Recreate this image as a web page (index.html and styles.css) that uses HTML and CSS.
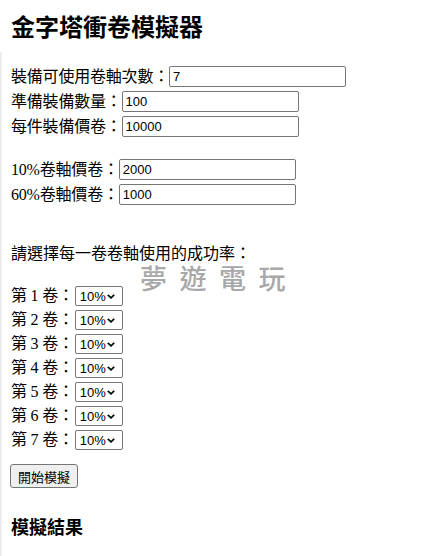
FILE: index.html
```html
<!DOCTYPE html>
<html lang="zh-Hant">
<head>
<meta charset="utf-8">
<title>金字塔衝卷模擬器</title>
<link rel="stylesheet" href="styles.css">
</head>
<body>
<h1 class="title">金字塔衝卷模擬器</h1>
<div class="page">
  <div class="group group-main">
    <div class="row"><label>裝備可使用卷軸次數：</label><input class="field" type="text" value="7"></div>
    <div class="row"><label>準備裝備數量：</label><input class="field" type="text" value="100"></div>
    <div class="row"><label>每件裝備價卷：</label><input class="field" type="text" value="10000"></div>
  </div>
  <div class="group group-price">
    <div class="row"><label>10%卷軸價卷：</label><input class="field" type="text" value="2000"></div>
    <div class="row"><label>60%卷軸價卷：</label><input class="field" type="text" value="1000"></div>
  </div>
  <p class="prompt">請選擇每一卷卷軸使用的成功率：</p>
  <div class="scrolls">
    <div class="srow"><label>第 1 卷：</label><select class="pick"><option>10%</option><option>60%</option></select></div>
    <div class="srow"><label>第 2 卷：</label><select class="pick"><option>10%</option><option>60%</option></select></div>
    <div class="srow"><label>第 3 卷：</label><select class="pick"><option>10%</option><option>60%</option></select></div>
    <div class="srow"><label>第 4 卷：</label><select class="pick"><option>10%</option><option>60%</option></select></div>
    <div class="srow"><label>第 5 卷：</label><select class="pick"><option>10%</option><option>60%</option></select></div>
    <div class="srow"><label>第 6 卷：</label><select class="pick"><option>10%</option><option>60%</option></select></div>
    <div class="srow"><label>第 7 卷：</label><select class="pick"><option>10%</option><option>60%</option></select></div>
  </div>
  <button class="btn" type="button">開始模擬</button>
  <h3 class="result">模擬結果</h3>
</div>
<div class="watermark">夢遊電玩</div>
</body>
</html>
```

FILE: styles.css
```css
html, body {
  margin: 0;
  padding: 0;
  background: #ffffff;
  color: #000000;
}
body {
  position: relative;
  height: 556px;
  overflow: hidden;
  font-family: "Liberation Serif", "Noto Sans CJK TC", serif;
  font-size: 16px;
}
.title {
  margin: 0;
  padding: 14px 0 0 11px;
  height: 28px;
  line-height: 28px;
  font-family: "Liberation Sans", "Noto Sans CJK TC", sans-serif;
  font-size: 24px;
  font-weight: bold;
}
.page {
  margin-top: 10px;
  border-left: 2px solid #ededed;
  padding-left: 9px;
  min-height: 520px;
}
.group-main {
  padding-top: 12px;
}
.group-price {
  padding-top: 18px;
}
.row {
  display: flex;
  align-items: center;
  height: 25px;
}
.row label, .srow label {
  line-height: 20px;
  white-space: pre;
  letter-spacing: -0.2px;
}
.field {
  box-sizing: border-box;
  width: 177px;
  height: 21px;
  margin: 0;
  padding: 1px 3px;
  border: 1px solid #767676;
  border-radius: 2px;
  font-family: "Liberation Sans", Arial, sans-serif;
  font-size: 13px;
  color: #000;
  background: #fff;
}
.prompt {
  margin: 0;
  padding-top: 34px;
  height: 25px;
  line-height: 25px;
}
.scrolls {
  padding-top: 18px;
}
.srow {
  display: flex;
  align-items: center;
  height: 24px;
}
.pick {
  -webkit-appearance: none;
  appearance: none;
  box-sizing: border-box;
  width: 48px;
  height: 20px;
  margin: 0 0 0 1px;
  padding: 0 0 0 4px;
  border: 1px solid #767676;
  border-radius: 2px;
  font-family: "Liberation Sans", Arial, sans-serif;
  font-size: 13px;
  color: #000;
  background-color: #fff;
  background-image: url("data:image/svg+xml;utf8,<svg xmlns='http://www.w3.org/2000/svg' width='8' height='5' viewBox='0 0 8 5'><path d='M0.8 0.8 L4 3.9 L7.2 0.8' fill='none' stroke='black' stroke-width='1.7'/></svg>");
  background-repeat: no-repeat;
  background-position: 31px 7px;
}
.btn {
  display: block;
  margin: 12px 0 0 -1px;
  box-sizing: border-box;
  height: 24px;
  padding: 0 7px;
  border: 1px solid #767676;
  border-radius: 3px;
  background: #efefef;
  font-family: "Noto Sans CJK TC", sans-serif;
  font-size: 13px;
  color: #000;
}
.result {
  margin: 0;
  padding-top: 28px;
  line-height: 24px;
  font-family: "Liberation Sans", "Noto Sans CJK TC", sans-serif;
  font-size: 18px;
  font-weight: bold;
}
.watermark {
  position: absolute;
  left: 140px;
  top: 258px;
  font-family: "Noto Sans CJK TC", sans-serif;
  font-size: 27px;
  font-weight: 500;
  line-height: 40px;
  letter-spacing: 12.5px;
  color: #a8a8a8;
}
```
